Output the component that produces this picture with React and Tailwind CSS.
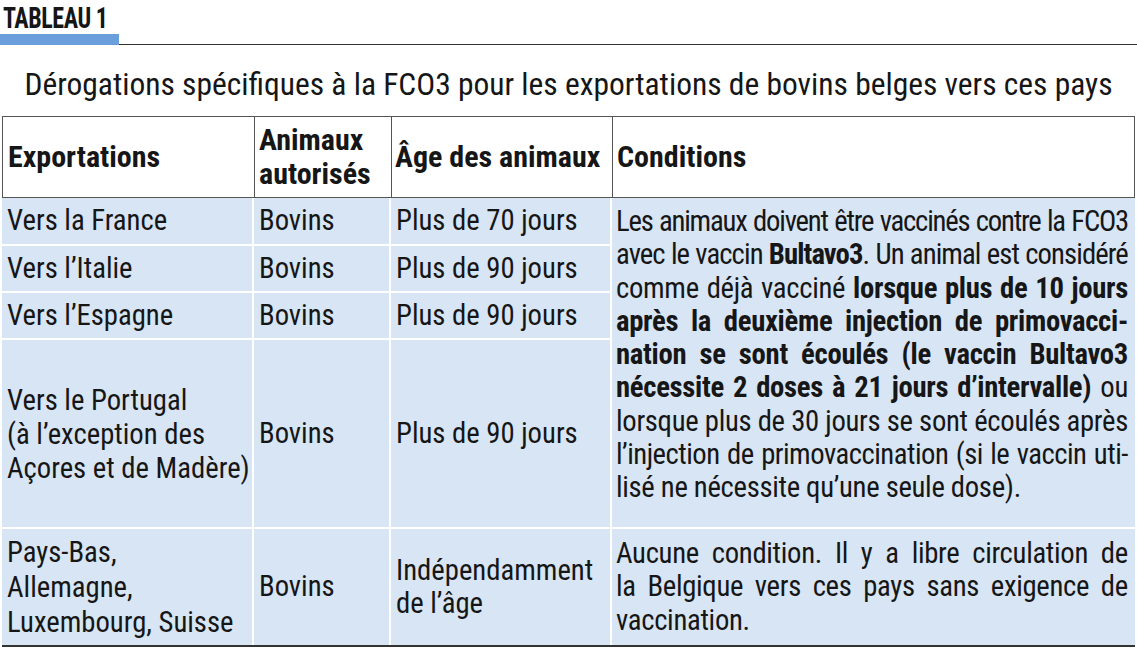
const rows = [
  { pays: ["Vers la France"], age: ["Plus de 70 jours"] },
  { pays: ["Vers l’Italie"], age: ["Plus de 90 jours"] },
  { pays: ["Vers l’Espagne"], age: ["Plus de 90 jours"] },
  {
    pays: ["Vers le Portugal", "(à l’exception des", "Açores et de Madère)"],
    age: ["Plus de 90 jours"],
  },
]

// each line of the justified paragraphs, word by word
const conditions = [
  { words: "Les animaux doivent être vaccinés contre la FCO3".split(" "), track: "tracking-[-1.2px]" },
  {
    words: ["avec", "le", "vaccin", <><b>Bultavo3</b>.</>, "Un", "animal", "est", "considéré"],
    track: "tracking-[-0.9px]",
  },
  { words: ["comme", "déjà", "vacciné", <b>lorsque</b>, <b>plus</b>, <b>de</b>, <b>10</b>, <b>jours</b>] },
  { words: "après la deuxième injection de primovacci-".split(" "), bold: true },
  { words: "nation se sont écoulés (le vaccin Bultavo3".split(" "), bold: true },
  {
    words: [<b>nécessite</b>, <b>2</b>, <b>doses</b>, <b>à</b>, <b>21</b>, <b>jours</b>, <b>d’intervalle)</b>, "ou"],
  },
  { words: "lorsque plus de 30 jours se sont écoulés après".split(" ") },
  { words: "l’injection de primovaccination (si le vaccin uti-".split(" "), track: "tracking-[-0.5px]" },
  { words: ["lisé ne nécessite qu’une seule dose)."], last: true },
]

const libre = [
  { words: "Aucune condition. Il y a libre circulation de".split(" ") },
  { words: "la Belgique vers ces pays sans exigence de".split(" ") },
  { words: ["vaccination."], last: true },
]

function Line({ line }) {
  if (line.last) return <div className="whitespace-nowrap tracking-[-0.3px]">{line.words[0]}</div>
  return (
    <div
      className={`flex justify-between whitespace-nowrap ${line.bold ? "font-bold" : ""} ${
        line.track || "tracking-[-0.3px]"
      }`}
    >
      {line.words.map((w, i) => (
        <span key={i}>{w}</span>
      ))}
    </div>
  )
}

function Cell({ children, className = "" }) {
  return (
    <div className={`bg-[#d7e5f5] px-[5px] flex flex-col justify-center ${className}`}>
      {children}
    </div>
  )
}

export default function App() {
  return (
    <div className="w-[1137px] h-[669px] bg-white text-[#161616] font-['Roboto_Condensed',sans-serif] overflow-hidden">
      <div className="pl-[3px] pt-[2px] h-[34px]">
        <div className="text-[30px] leading-[32px] font-bold tracking-[-0.5px] origin-left scale-x-[0.8]">
          TABLEAU 1
        </div>
      </div>
      <div className="flex items-end h-[11px]">
        <div className="w-[119px] h-[11px] bg-[#6a9fdc]"></div>
        <div className="flex-1 h-[1.5px] bg-[#333]"></div>
      </div>

      <div className="h-[71px] flex items-center justify-center text-[31.5px] leading-[40px] pt-[9px] whitespace-nowrap">
        Dérogations spécifiques à la FCO3 pour les exportations de bovins belges vers ces pays
      </div>

      <div className="mx-[2px] border-b-2 border-[#333]">
        <div className="grid grid-cols-[251px_137px_221px_1fr] h-[82px] border border-[#555] text-[30px] leading-[34px] font-bold">
          <div className="flex items-center px-[5px]">Exportations</div>
          <div className="flex flex-col justify-center px-[4px] border-l border-[#555]">
            <div>Animaux</div>
            <div>autorisés</div>
          </div>
          <div className="flex items-center px-[3px] border-l border-[#555] whitespace-nowrap">Âge des animaux</div>
          <div className="flex items-center px-[4px] border-l border-[#555]">Conditions</div>
        </div>

        <div className="grid grid-cols-[250px_135px_219px_1fr] grid-rows-[46px_45px_45px_187px_116px] gap-[2px] bg-white text-[28.7px] leading-[33.3px]">
          {rows.map((r, i) => [
            <Cell key={"p" + i} className={i === 3 ? "leading-[34px]" : ""}>
              {r.pays.map((t) => (
                <div key={t} className="whitespace-nowrap">{t}</div>
              ))}
            </Cell>,
            <Cell key={"b" + i}>Bovins</Cell>,
            <Cell key={"a" + i} className="whitespace-nowrap">
              {r.age.map((t) => (
                <div key={t}>{t}</div>
              ))}
            </Cell>,
            i === 0 ? (
              <div key="cond" className="row-span-4 bg-[#d7e5f5] pl-[4px] pr-[7px] pt-[7px]">
                {conditions.map((l, j) => (
                  <Line key={j} line={l} />
                ))}
              </div>
            ) : null,
          ])}

          <Cell className="leading-[35px]">
            <div>Pays-Bas,</div>
            <div>Allemagne,</div>
            <div className="whitespace-nowrap">Luxembourg, Suisse</div>
          </Cell>
          <Cell>Bovins</Cell>
          <Cell>
            <div>Indépendamment</div>
            <div>de l’âge</div>
          </Cell>
          <div className="bg-[#d7e5f5] pl-[4px] pr-[7px] flex flex-col justify-center">
            {libre.map((l, j) => (
              <Line key={j} line={l} />
            ))}
          </div>
        </div>
      </div>
    </div>
  )
}
